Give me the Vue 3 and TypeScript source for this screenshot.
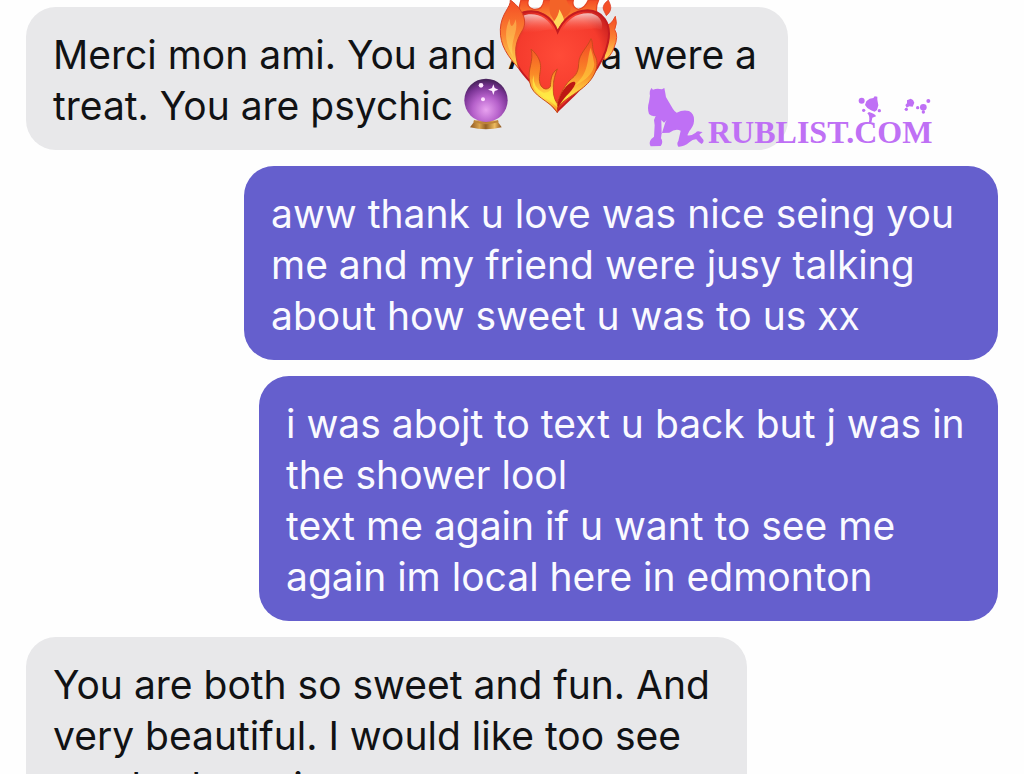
<script setup lang="ts">
interface Message {
  id: number
  side: 'received' | 'sent'
  size: string
  lines: string[]
}

const replies: Message[] = [
  {
    id: 2,
    side: 'sent',
    size: 'wide',
    lines: [
      'aww thank u love was nice seing you',
      'me and my friend were jusy talking',
      'about how sweet u was to us xx',
    ],
  },
  {
    id: 3,
    side: 'sent',
    size: 'medium',
    lines: [
      'i was abojt to text u back but j was in',
      'the shower lool',
      'text me again if u want to see me',
      'again im local here in edmonton',
    ],
  },
  {
    id: 4,
    side: 'received',
    size: 'narrow',
    lines: ['You are both so sweet and fun. And', 'very beautiful. I would like too see', 'you both again'],
  },
]
</script>

<template>
  <main class="chat">
    <article class="bubble received first">
      <p class="line">Merci mon ami. You and A<span class="covered"></span>a were a</p>
      <p class="line">
        treat. You are psychic
        <svg class="crystal" viewBox="0 0 132 156" role="img" aria-label="Crystal ball">
          <defs>
            <radialGradient id="orb" cx="50%" cy="72%" r="68%">
              <stop offset="0" stop-color="#e8a2f0" />
              <stop offset=".45" stop-color="#b661cb" />
              <stop offset=".8" stop-color="#793394" />
              <stop offset="1" stop-color="#4b245f" />
            </radialGradient>
            <linearGradient id="stand">
              <stop offset="0" stop-color="#8d5420" />
              <stop offset=".3" stop-color="#d9a34c" />
              <stop offset=".5" stop-color="#946025" />
              <stop offset=".78" stop-color="#efbd60" />
              <stop offset="1" stop-color="#8a501d" />
            </linearGradient>
          </defs>
          <path d="M32 129Q66 119 100 129L113 148Q66 160 18 148Z" fill="url(#stand)" />
          <circle cx="66" cy="67" r="65" fill="url(#orb)" />
          <path d="M30 126Q66 140 102 126L104 133Q66 144 28 133Z" fill="#be8439" />
          <path d="M88 19l4 11 11 5-11 4-4 12-4-12-12-4 12-5Z" fill="#fff0ff" />
          <circle cx="51" cy="22" r="7" fill="#ffe9ff" />
          <circle cx="57" cy="64" r="6" fill="#ffdfff" />
        </svg>
      </p>

      <svg class="heart" viewBox="0 0 420 360" role="img" aria-label="Heart on fire">
        <defs>
          <linearGradient id="flame" x1="0" y1="0" x2="0" y2="1">
            <stop offset="0" stop-color="#f44b24" />
            <stop offset=".5" stop-color="#fb8232" />
            <stop offset="1" stop-color="#ffdc55" />
          </linearGradient>
          <linearGradient id="front" x1="0" y1="0" x2="0" y2="1">
            <stop offset="0" stop-color="#f34525" />
            <stop offset=".48" stop-color="#fa8b27" />
            <stop offset=".8" stop-color="#ffe447" />
            <stop offset="1" stop-color="#f98b21" />
          </linearGradient>
          <radialGradient id="red" cx="50%" cy="45%" r="65%">
            <stop offset="0" stop-color="#ff4b38" />
            <stop offset=".65" stop-color="#f53b2d" />
            <stop offset="1" stop-color="#b41419" />
          </radialGradient>
          <linearGradient id="shine" x1="0" y1="0" x2="0" y2="1">
            <stop offset="0" stop-color="#fff" stop-opacity=".7" />
            <stop offset="1" stop-color="#ff7560" stop-opacity="0" />
          </linearGradient>
        </defs>
        <path d="M80 52L93 0H115Q108 22 131 28Q158 31 162 0H250Q244 22 265 28Q285 25 295 0H326Q314 24 323 53Q240 8 203 91Q162 6 80 52Z" fill="url(#flame)" stroke="#e64724" stroke-width="4" />
        <path d="M180 0Q175 20 181 43L203 81L225 51Q246 38 241 22Q228 0 230 0Z" fill="#f36328" />
        <path d="M188 70Q207 46 208 28Q222 53 222 60L203 88Z" fill="#ffd85c" />
        <path d="M355 0Q334 16 341 31L349 47Q367 32 361 14Z" fill="#f45028" stroke="#d83a25" stroke-width="2" />
        <path d="M376 49Q383 71 374 89Q387 108 372 143Q361 173 342 180L352 74Q362 76 376 49Z" fill="url(#flame)" stroke="#e64b26" stroke-width="3" />
        <path d="M203 96C186 46 143 26 101 37C62 48 54 96 64 144C78 222 131 248 202 334C262 275 338 212 354 127C367 67 335 32 293 31C251 31 219 59 203 96Z" fill="url(#red)" stroke="#c41b20" stroke-width="6" />
        <path d="M191 89C177 55 142 37 109 44C77 51 82 83 96 95C126 107 157 86 191 89Z" fill="url(#shine)" />
        <path d="M215 91C233 59 257 40 294 40C326 40 342 65 335 90C301 76 262 102 215 91Z" fill="url(#shine)" />
        <path d="M61 0C63 22 33 40 31 88C29 137 55 170 86 205C70 150 76 126 99 88C115 55 89 20 61 0Z" fill="url(#flame)" stroke="#d84225" stroke-width="3" />
        <path d="M59 56C41 94 46 133 69 170C58 120 87 98 77 58C68 86 60 83 59 56Z" fill="#fff06c" fill-opacity=".38" />
        <path d="M123 147C133 185 111 205 119 246C125 291 180 300 202 338C198 313 237 294 274 267C313 238 329 199 317 171C303 144 311 131 303 116C292 143 267 161 266 190C266 222 250 232 240 240C221 259 206 293 202 310C181 285 189 238 202 207C180 222 183 246 181 259C171 275 151 265 149 245C143 218 171 190 123 147Z" fill="url(#front)" stroke="#c94a1d" stroke-width="3" stroke-linejoin="round" />
        <path d="M202 313C210 280 225 258 242 248C256 241 261 248 251 262C235 286 209 303 202 333Z" fill="#bd1713" />
        <path d="M131 225Q128 263 160 278Q187 280 190 246Q183 286 203 322Q163 290 143 279Q120 257 131 225Z" fill="#fff044" fill-opacity=".7" />
        <path d="M302 143C289 179 301 215 251 259Q311 230 313 192Q310 170 302 143Z" fill="#ffdc42" fill-opacity=".5" />
      </svg>
    </article>

    <article v-for="message in replies" :key="message.id" class="bubble" :class="[message.side, message.size]">
      <p v-for="line in message.lines" :key="line" class="line">{{ line }}</p>
    </article>

    <div class="brand">
      <svg class="figure" viewBox="0 0 168 180" aria-hidden="true">
        <path d="M10 0L15 5Q27 0 42 4L49 0L52 16Q52 27 59 36L75 63Q79 70 86 74Q105 64 123 69Q140 77 138 100Q137 115 124 129L118 142Q130 144 143 134Q148 128 157 131L164 132Q157 137 154 140L166 155Q169 163 161 168Q152 164 145 154Q135 153 124 163Q108 177 91 176Q85 167 91 159L98 128Q83 120 64 134L41 135L39 151Q47 163 38 174L8 175Q1 163 10 153L18 146L20 112L18 96L23 84Q10 86 3 78Q-3 60 3 42L6 23Q3 11 10 0ZM40 96L41 138L52 103L56 96L48 104Z" fill-rule="evenodd" />
      </svg>
      <span class="brand-name">RUBLIST.COM</span>
      <svg class="splash" viewBox="0 0 225 90" aria-hidden="true">
        <path d="M28 16L38 8L49 6L53 1L61 2L61 11L64 28L60 42L53 47L42 43L31 36L24 27Z" />
        <circle cx="14" cy="14" r="9" /><circle cx="20" cy="43" r="5" /><circle cx="67" cy="44" r="5" />
        <path d="M36 48Q55 53 57 61L46 65L43 80L35 81Q41 62 31 52Z" />
        <path d="M150 13L161 8L168 12L172 20L167 32L157 31L149 35L145 27L150 22Z" />
        <circle cx="148" cy="40" r="5" /><circle cx="182" cy="35" r="5" /><circle cx="199" cy="34" r="10" /><circle cx="214" cy="15" r="6" /><circle cx="199" cy="48" r="5" />
      </svg>
    </div>
  </main>
</template>

<style>
html,
body {
  margin: 0;
  background: #fefefe;
}
</style>

<style scoped>
.chat {
  position: relative;
  box-sizing: border-box;
  display: flex;
  flex-direction: column;
  gap: 16px;
  height: 100vh;
  padding: 7px 26px 0;
  overflow: hidden;
  font-family: Inter, "Liberation Sans", sans-serif;
  font-size: 39px;
  line-height: 51px;
}

.bubble {
  box-sizing: border-box;
  flex: none;
  max-width: 100%;
  padding: 22px 27px 19px;
  border-radius: 30px;
}

.received {
  align-self: flex-start;
  background: #e8e8ea;
  color: #111214;
}

.sent {
  align-self: flex-end;
  background: #655fcd;
  color: #fafaff;
}

.first {
  position: relative;
  width: 762px;
}

.wide {
  width: 754px;
}

.medium {
  width: 739px;
}

.narrow {
  width: 721px;
}

.line {
  margin: 0;
  white-space: nowrap;
}

.covered {
  display: inline-block;
  width: 66px;
}

.crystal {
  width: 44px;
  height: 52px;
  margin-top: -10px;
  vertical-align: -10px;
}

.heart {
  position: absolute;
  top: -7px;
  left: 464px;
  width: 140px;
  height: 120px;
}

.brand {
  position: absolute;
  top: 88px;
  left: 648px;
  display: flex;
  align-items: flex-end;
  gap: 4px;
  color: #bf70f5;
}

.figure {
  width: 56px;
  height: 60px;
  fill: currentColor;
}

.brand-name {
  font-family: "Liberation Serif", serif;
  font-size: 32px;
  font-weight: 700;
  line-height: 32px;
}

.splash {
  position: absolute;
  top: 8px;
  left: 209px;
  width: 75px;
  height: 30px;
  fill: currentColor;
}
</style>
